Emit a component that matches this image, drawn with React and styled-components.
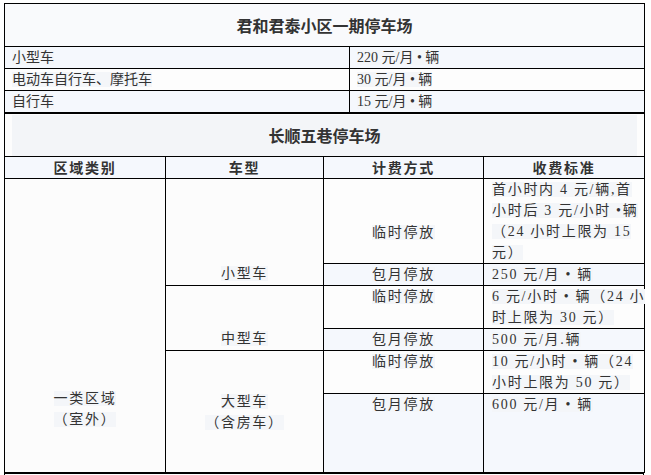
import styled, { createGlobalStyle } from 'styled-components';

const GlobalStyle = createGlobalStyle`
  html, body {
    margin: 0;
    padding: 0;
    background: #fff;
    overflow: hidden;
  }
  body {
    font-family: "Liberation Serif", "Noto Sans CJK SC", serif;
    color: #333;
  }
`;

const Page = styled.div`
  padding: 3px 7px 0 4px;
  height: 475px;
  box-sizing: border-box;
`;

const Table = styled.table`
  width: 640px;
  border-collapse: collapse;
  table-layout: fixed;
  font-size: 14px;
  letter-spacing: ${({ $spacing }) => $spacing || '0'};
`;

const Row = styled.tr`
  height: ${({ $h }) => $h}px;
  background: ${({ $tint }) => ($tint ? '#f5f8fd' : '#fdfdfd')};
`;

const TitleCell = styled.td`
  border: 1px solid #000;
  padding: 0;
  text-align: center;
  font-family: "Noto Sans CJK SC", sans-serif;
  font-size: 16px;
  font-weight: 700;
  letter-spacing: 0;
  color: #333;
  background: ${({ $boxed }) => ($boxed ? '#fdfdfd' : '#f9fafc')};
`;

const TitleBox = styled.div`
  margin: 0 7px;
  height: 41px;
  line-height: 41px;
  background: ${({ $boxed }) => ($boxed ? '#f3f5f8' : 'transparent')};
`;

const HeadCell = styled.th`
  border: 1px solid #000;
  padding: 0;
  height: 21px;
  line-height: 21px;
  font-family: "Noto Sans CJK SC", sans-serif;
  font-size: 14px;
  font-weight: 700;
  color: #333;
  text-align: center;
`;

const Cell = styled.td`
  border: 1px solid #000;
  padding: ${({ $pad }) => $pad || '0 8px'};
  line-height: 21px;
  text-align: ${({ $center }) => ($center ? 'center' : 'left')};
  vertical-align: ${({ $valign }) => $valign || 'top'};
  white-space: nowrap;
  background: ${({ $bg }) => $bg || 'transparent'};
`;

const Mark = styled.span`
  background: #f4f6f9;
`;

const Line = styled.div`
  line-height: 21px;
`;

const FIRST_ROWS = [
  ['小型车', '220 元/月 • 辆'],
  ['电动车自行车、摩托车', '30 元/月 • 辆'],
  ['自行车', '15 元/月 • 辆'],
];

const HEADERS = ['区域类别', '车型', '计费方式', '收费标准'];

const Lines = ({ lines }) =>
  lines.map((text) => (
    <Line key={text}>
      <Mark>{text}</Mark>
    </Line>
  ));

const App = () => (
  <Page>
    <GlobalStyle />
    <Table>
      <colgroup>
        <col style={{ width: '345px' }} />
        <col style={{ width: '295px' }} />
      </colgroup>
      <tbody>
        <Row $h={43}>
          <TitleCell colSpan={2}>君和君泰小区一期停车场</TitleCell>
        </Row>
        {FIRST_ROWS.map(([type, price], i) => (
          <Row key={type} $h={22} $tint={i % 2 === 0}>
            <Cell $pad="0 7px">
              <Mark>{type}</Mark>
            </Cell>
            <Cell $pad="0 7px">
              <Mark>{price}</Mark>
            </Cell>
          </Row>
        ))}
      </tbody>
    </Table>

    <Table $spacing="1.7px">
      <colgroup>
        <col style={{ width: '161px' }} />
        <col style={{ width: '158px' }} />
        <col style={{ width: '160px' }} />
        <col style={{ width: '161px' }} />
      </colgroup>
      <tbody>
        <Row $h={43}>
          <TitleCell colSpan={4} $boxed>
            <TitleBox $boxed>长顺五巷停车场</TitleBox>
          </TitleCell>
        </Row>
        <Row $h={22} $tint>
          {HEADERS.map((h) => (
            <HeadCell key={h}>{h}</HeadCell>
          ))}
        </Row>

        <Row $h={84}>
          <Cell rowSpan={6} $center $valign="bottom" $pad="0 8px 42px" $bg="#fcfcfc">
            <Lines lines={['一类区域', '（室外）']} />
          </Cell>
          <Cell rowSpan={2} $center $valign="bottom" $pad="0 8px 1px" $bg="#fcfcfc">
            <Lines lines={['小型车']} />
          </Cell>
          <Cell $center $valign="bottom" $pad="0 8px 20px">
            <Lines lines={['临时停放']} />
          </Cell>
          <Cell>
            <Lines
              lines={['首小时内 4 元/辆,首', '小时后 3 元/小时 •辆', '（24 小时上限为 15', '元）']}
            />
          </Cell>
        </Row>
        <Row $h={22} $tint>
          <Cell $center>
            <Lines lines={['包月停放']} />
          </Cell>
          <Cell>
            <Lines lines={['250 元/月 • 辆']} />
          </Cell>
        </Row>

        <Row $h={43}>
          <Cell rowSpan={2} $center $valign="bottom" $pad="0 8px 1px" $bg="#fcfcfc">
            <Lines lines={['中型车']} />
          </Cell>
          <Cell $center>
            <Lines lines={['临时停放']} />
          </Cell>
          <Cell>
            <Lines lines={['6 元/小时 • 辆（24 小', '时上限为 30 元）']} />
          </Cell>
        </Row>
        <Row $h={21} $tint>
          <Cell $center>
            <Lines lines={['包月停放']} />
          </Cell>
          <Cell>
            <Lines lines={['500 元/月.辆']} />
          </Cell>
        </Row>

        <Row $h={43}>
          <Cell rowSpan={2} $center $valign="middle" $bg="#fcfcfc">
            <Lines lines={['大型车', '（含房车）']} />
          </Cell>
          <Cell $center>
            <Lines lines={['临时停放']} />
          </Cell>
          <Cell>
            <Lines lines={['10 元/小时 • 辆（24', '小时上限为 50 元）']} />
          </Cell>
        </Row>
        <Row $h={79} $tint>
          <Cell $center>
            <Lines lines={['包月停放']} />
          </Cell>
          <Cell>
            <Lines lines={['600 元/月 • 辆']} />
          </Cell>
        </Row>
      </tbody>
    </Table>

    <Table>
      <tbody>
        <Row $h={30}>
          <Cell />
        </Row>
      </tbody>
    </Table>
  </Page>
);

export default App;
